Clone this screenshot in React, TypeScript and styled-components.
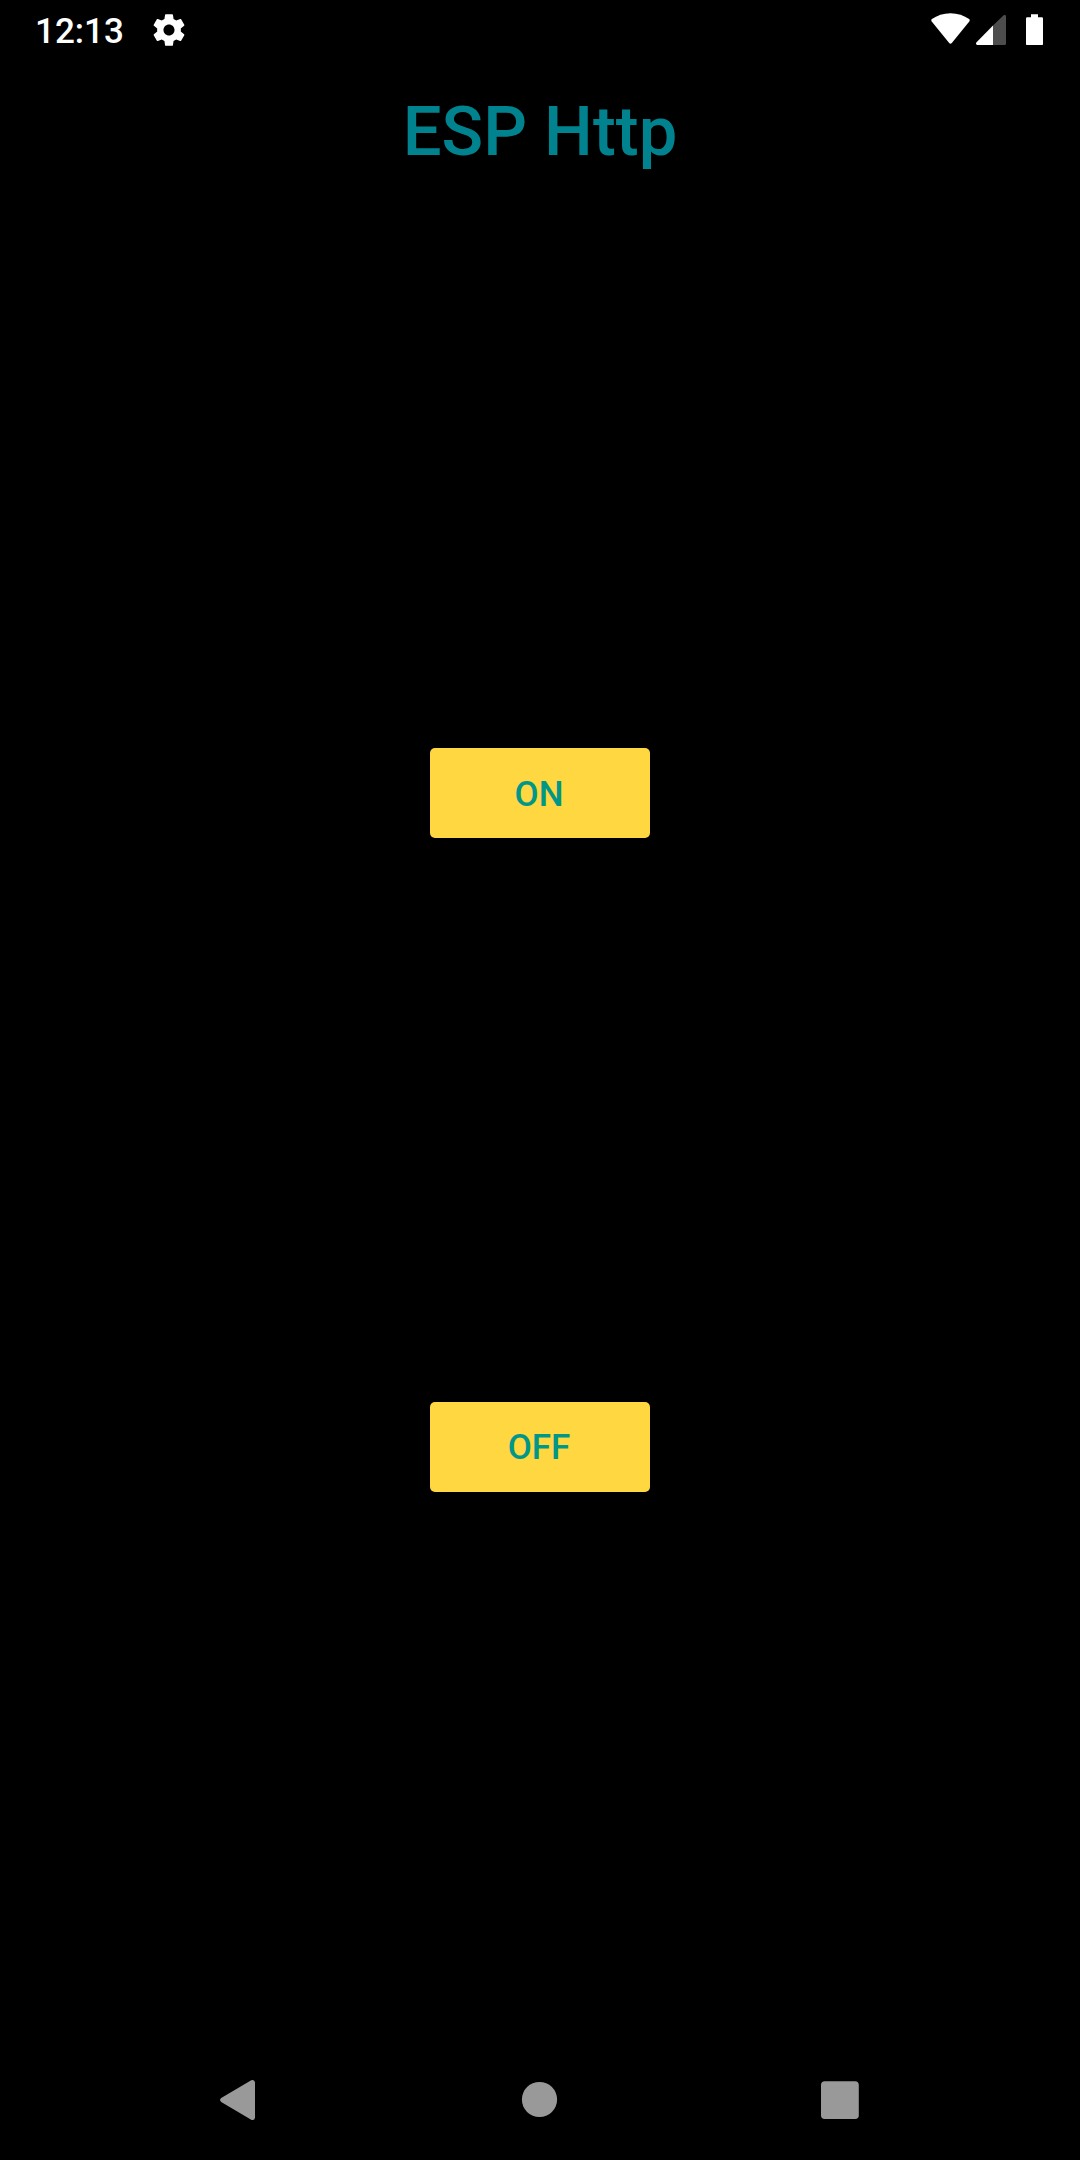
import React from "react";
import styled, { createGlobalStyle } from "styled-components";

const GlobalStyle = createGlobalStyle`
  body {
    margin: 0;
    background: #000;
  }
`;

const Screen = styled.div`
  display: flex;
  flex-direction: column;
  width: 1080px;
  height: 2160px;
  background: #000;
  font-family: Roboto, "Noto Sans", sans-serif;
  font-weight: 500;
`;

const StatusBar = styled.header`
  display: flex;
  align-items: center;
  justify-content: space-between;
  height: 60px;
  padding: 0 37px 0 35px;
  color: #fff;
`;

const StatusGroup = styled.div<{ $gap: number }>`
  display: flex;
  align-items: center;
  gap: ${(p) => p.$gap}px;
`;

const Clock = styled.span`
  padding-top: 2px;
  font-size: 35px;
  line-height: 41px;
`;

const Icon = styled.svg`
  display: block;
  flex: none;
`;

const AppBar = styled.div`
  display: flex;
  align-items: center;
  justify-content: center;
  height: 140px;
`;

const Title = styled.h1`
  margin: 0;
  padding-top: 3px;
  font-size: 68.75px;
  font-weight: 500;
  line-height: 82px;
  color: #00838f;
`;

const Body = styled.main`
  display: flex;
  flex: 1;
  flex-direction: column;
  align-items: center;
  justify-content: space-evenly;
`;

const TapTarget = styled.div`
  display: flex;
  align-items: center;
  height: 120px;
`;

const RaisedButton = styled.button`
  box-sizing: border-box;
  width: 220px;
  height: 90px;
  padding: 2px 2px 0 0;
  border: 0;
  border-radius: 5px;
  background: #ffd740;
  color: #009688;
  font: 500 35px/41px Roboto, "Noto Sans", sans-serif;
`;

const NavBar = styled.nav`
  display: flex;
  align-items: center;
  justify-content: center;
  gap: 240px;
  height: 120px;
  color: #999;
`;

const GearIcon = () => (
  <Icon width="38" height="38" viewBox="0 0 24 24" fill="currentColor">
    <path d="M19.43 12.98c.04-.32.07-.64.07-.98s-.03-.66-.07-.98l2.11-1.65c.19-.15.24-.42.12-.64l-2-3.46c-.12-.22-.39-.3-.61-.22l-2.49 1c-.52-.4-1.08-.73-1.69-.98l-.38-2.65C14.46 2.18 14.25 2 14 2h-4c-.25 0-.46.18-.49.42l-.38 2.65c-.61.25-1.17.59-1.69.98l-2.49-1c-.23-.09-.49 0-.61.22l-2 3.46c-.13.22-.07.49.12.64l2.11 1.65c-.04.32-.07.65-.07.98s.03.66.07.98l-2.11 1.65c-.19.15-.24.42-.12.64l2 3.46c.12.22.39.3.61.22l2.49-1c.52.4 1.08.73 1.69.98l.38 2.65c.03.24.24.42.49.42h4c.25 0 .46-.18.49-.42l.38-2.65c.61-.25 1.17-.59 1.69-.98l2.49 1c.23.09.49 0 .61-.22l2-3.46c.12-.22.07-.49-.12-.64l-2.11-1.65zM12 15.5c-1.93 0-3.5-1.57-3.5-3.5s1.57-3.5 3.5-3.5 3.5 1.57 3.5 3.5-1.57 3.5-3.5 3.5z" />
  </Icon>
);

const WifiIcon = () => (
  <Icon width="39" height="34" viewBox="0 0 39 34" fill="currentColor">
    <path d="M19.5 0.2C12.4 0.2 6 2.4 0.9 6.1Q-0.2 7.1 0.7 8.4L18.2 30.1Q19.5 31.5 20.8 30.1L38.3 8.4Q39.2 7.1 38.1 6.1C33 2.4 26.6 0.2 19.5 0.2Z" />
  </Icon>
);

const SignalIcon = () => (
  <Icon width="30" height="30" viewBox="0 0 30 30" fill="currentColor">
    <path
      opacity="0.3"
      d="M17 10.6V30H28.5Q30 30 30 28.5V1.3Q29.8 -0.7 27.6 0.3Z"
    />
    <path d="M17 10.6V30H1.3Q-0.6 29.7 0.3 27.6Z" />
  </Icon>
);

const BatteryIcon = () => (
  <Icon width="17" height="32" viewBox="0 0 17 32" fill="currentColor">
    <path d="M5 0.2H12V3.2H15.8Q17 3.2 17 4.4V29.9Q17 31.1 15.8 31.1H1.2Q0 31.1 0 29.9V4.4Q0 3.2 1.2 3.2H5Z" />
  </Icon>
);

const BackIcon = () => (
  <Icon width="60" height="60" viewBox="0 0 60 60" fill="currentColor">
    <path d="M11.2 28.1L41.2 10.2Q44.6 9 45 12.4V47.6Q44.6 51 41.2 49.8L11.2 31.9Q8.8 30 11.2 28.1Z" />
  </Icon>
);

const HomeIcon = () => (
  <Icon width="60" height="60" viewBox="0 0 60 60" fill="currentColor">
    <circle cx="29.5" cy="29.5" r="17.6" />
  </Icon>
);

const RecentsIcon = () => (
  <Icon width="60" height="60" viewBox="0 0 60 60" fill="currentColor">
    <rect x="11" y="11.2" width="37.8" height="37.8" rx="3.8" />
  </Icon>
);

export default function App() {
  return (
    <Screen>
      <GlobalStyle />
      <StatusBar>
        <StatusGroup $gap={26}>
          <Clock>12:13</Clock>
          <GearIcon />
        </StatusGroup>
        <StatusGroup $gap={20}>
          <StatusGroup $gap={6}>
            <WifiIcon />
            <SignalIcon />
          </StatusGroup>
          <BatteryIcon />
        </StatusGroup>
      </StatusBar>
      <AppBar>
        <Title>ESP Http</Title>
      </AppBar>
      <Body>
        <TapTarget>
          <RaisedButton>ON</RaisedButton>
        </TapTarget>
        <TapTarget>
          <RaisedButton>OFF</RaisedButton>
        </TapTarget>
      </Body>
      <NavBar>
        <BackIcon />
        <HomeIcon />
        <RecentsIcon />
      </NavBar>
    </Screen>
  );
}
